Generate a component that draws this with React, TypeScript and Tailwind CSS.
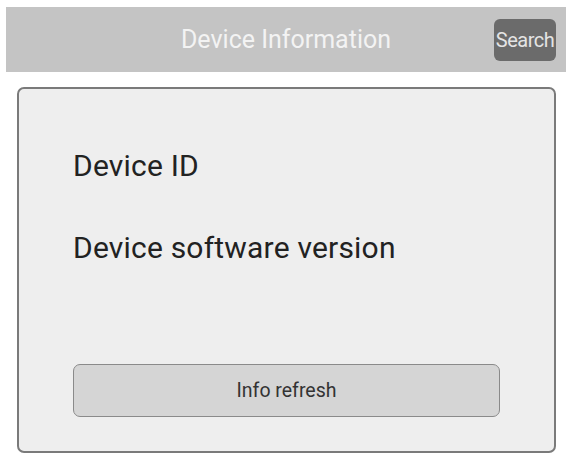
export default function App() {
  return (
    <div className="min-h-[460px] w-[577px] bg-white pt-[7px] font-['Roboto',sans-serif]">
      <header className="ml-[6px] mr-[11px] flex h-[65px] items-center justify-center bg-[#c4c4c4] relative">
        <h1 className="text-[25px] text-[#f3f3f3]">Device Information</h1>
        <button className="absolute right-[10px] top-[12px] h-[42px] w-[62px] rounded-[6px] bg-[#6b6b6b] text-[20px] tracking-[-0.5px] text-[#e4e4e4]">
          Search
        </button>
      </header>

      <main className="ml-[17px] mr-[21px] mt-[15px] flex h-[366px] flex-col rounded-[7px] border-2 border-[#7a7a7a] bg-[#eeeeee]">
        <div className="flex flex-col gap-[47px] pl-[54px] pt-[59px] text-[30px] tracking-[0.2px] text-[#222]">
          <span className="leading-[35px]">Device ID</span>
          <span className="leading-[35px]">Device software version</span>
        </div>
        <button className="mx-[54px] mt-auto mb-[34px] h-[53px] rounded-[7px] border-[1.5px] border-[#8a8a8a] bg-[#d5d5d5] text-[19.5px] text-[#333]">
          Info refresh
        </button>
      </main>
    </div>
  );
}
